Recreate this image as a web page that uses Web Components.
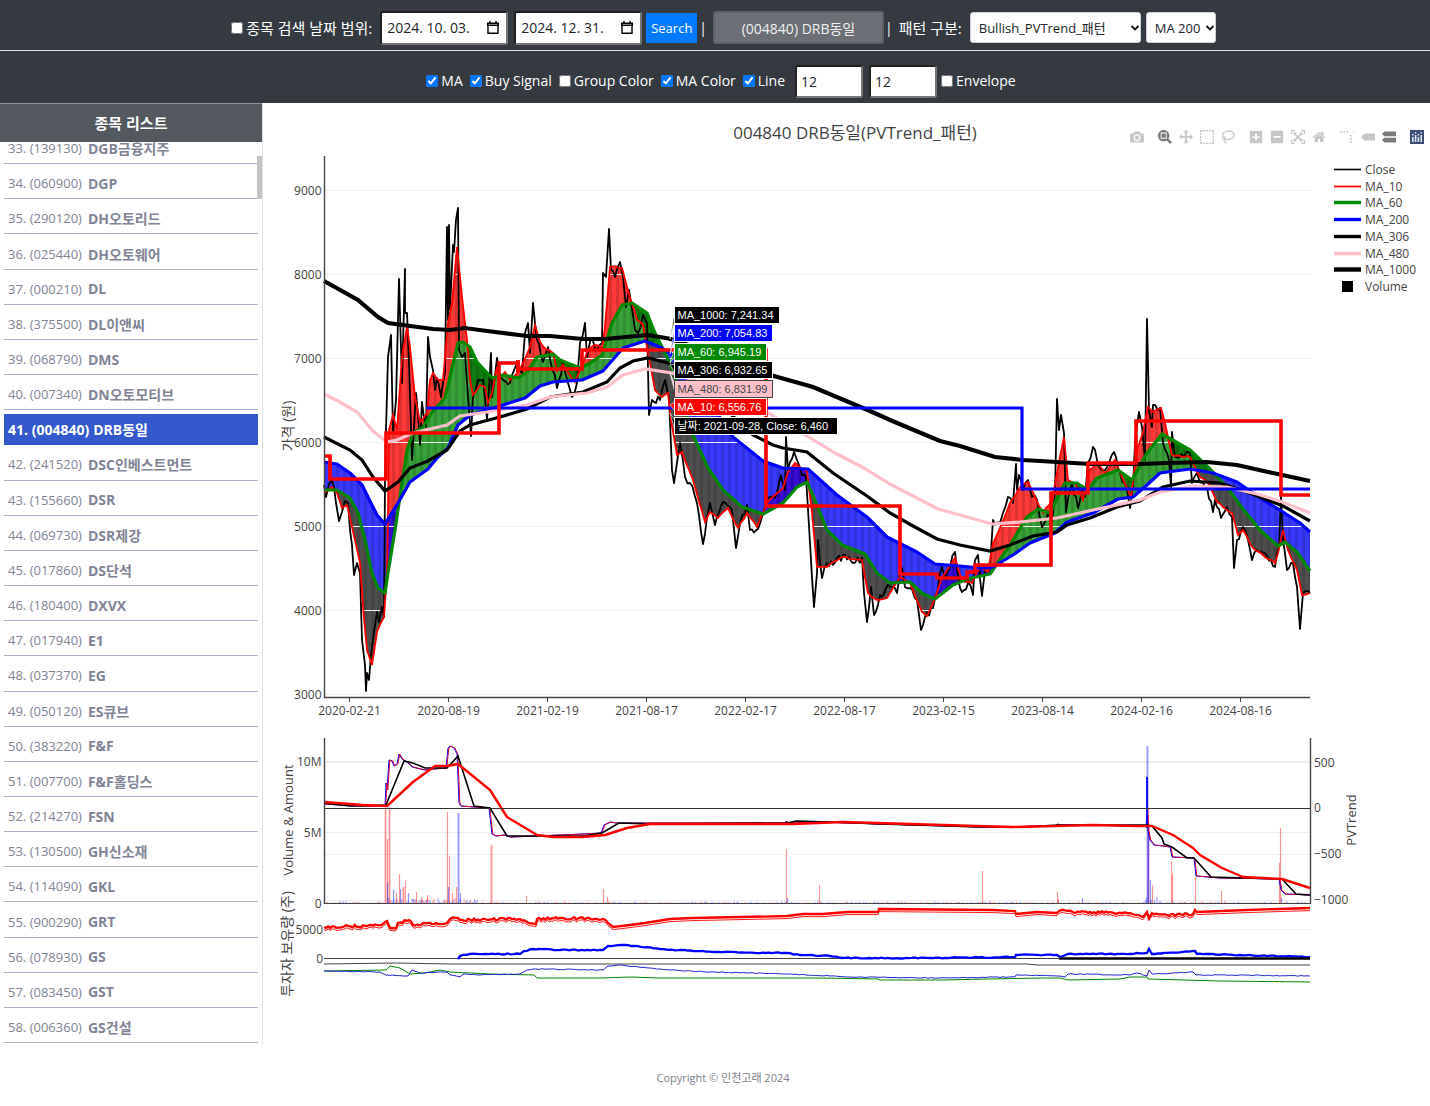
<!DOCTYPE html>
<html lang="ko">
<head>
<meta charset="utf-8">
<title>DRB동일</title>
<style>
html,body{margin:0;background:#fff}
body{font-family:"Open Sans","Noto Sans CJK KR",sans-serif;font-size:14px;color:#212529}
</style>
</head>
<body>
<stock-app></stock-app>
<script>
const define=(name,html,setup)=>customElements.define(name,class extends HTMLElement{
  connectedCallback(){
    if(this.shadowRoot)return;
    const root=this.attachShadow({mode:'open'});
    root.innerHTML=typeof html==='function'?html(this):html;
    if(setup)setup(this,root);
  }
});

define('check-option',el=>`<style>
:host{display:block}
label{display:flex;align-items:center;gap:3px;white-space:nowrap;line-height:20px}
input{width:12px;height:12px;margin:0;accent-color:#0075ff}
</style><label><input type="checkbox" ${el.hasAttribute('checked')?'checked':''}><slot></slot></label>`);

define('date-box',el=>`<style>
:host{display:grid;width:128px}
input,svg{grid-area:1/1}
input{box-sizing:border-box;width:100%;height:34px;border:2px inset #767676;border-radius:3px;padding:0 5px;font:inherit;color:#212529;background:#fff}
svg{align-self:center;justify-self:end;margin-right:9px}
</style><input type="text" aria-label="${el.getAttribute('label')}" value="${el.getAttribute('value')}">
<svg width="12" height="13" viewBox="0 0 12 13"><path d="M1 3v9.2h10V3M0.5 2.2h11v2H.5zM3 0v2M9 0v2" fill="none" stroke="#000" stroke-width="1.4"/></svg>`);

define('number-box',el=>`<style>
:host{display:block;width:68px}
input{box-sizing:border-box;width:100%;height:33px;border:2px inset #767676;border-radius:3px;padding:0 4px;font:inherit;color:#212529;background:#fff;display:block}
</style><input type="text" aria-label="${el.getAttribute('label')}" value="${el.getAttribute('value')}">`);

define('pick-list',el=>`<style>
:host{display:grid}
select,svg{grid-area:1/1}
select{appearance:none;box-sizing:border-box;width:100%;height:31px;border:1px solid #ced4da;border-radius:3px;background:#fff;font:inherit;font-size:13px;color:#212529;padding:0 0 0 8px}
svg{align-self:center;justify-self:end;margin-right:1px;pointer-events:none}
</style><select aria-label="${el.getAttribute('label')}"><option>${el.getAttribute('value')}</option></select>
<svg width="10" height="8" viewBox="0 0 10 8"><path d="M1.5 2L5 5.5 8.5 2" fill="none" stroke="#111" stroke-width="1.8"/></svg>`);

define('tool-bar',`<style>
:host{display:block;background:#343a40;color:#fff}
.row{box-sizing:border-box;display:flex;align-items:center;justify-content:center}
.one{height:51px;padding:5px 0 0 17px;border-bottom:1px solid #dee2e6}
.two{height:52px;padding:8px 0 0 12px;gap:7px}
.one>*{margin-right:6px}
.one>:last-child{margin-right:0}
button{font:inherit;color:#fff;border:0;padding:0}
.go{background:#007bff;width:51px;height:30px;font-size:13px}
.stock{background:#6c6f75;border:2px solid #5d6167;border-radius:3px;width:171px;height:33px;color:#f1f1f1}
.one>.a{margin-right:8px;font-size:15px}
.one>.t{margin-right:4px}
.one>.go{margin-right:2px}
.one>.stock{margin-right:1px}
.one>.c{font-size:15px;margin-right:8px}
.first{width:171px}.ma{width:70px}
.one>.first{margin-right:5px}
.nums{display:flex;gap:6px;margin-left:3px}
.end{margin-left:-3px}
</style>
<div class="row one">
<check-option class="a">종목 검색 날짜 범위:</check-option>
<date-box label="시작일" value="2024. 10. 03."></date-box><date-box class="t" label="종료일" value="2024. 12. 31."></date-box>
<button class="go">Search</button><span>|</span>
<button class="stock">(004840) DRB동일</button><span>|</span><span class="c">패턴 구분:</span>
<pick-list class="first" label="패턴" value="Bullish_PVTrend_패턴"></pick-list><pick-list class="ma" label="이동평균" value="MA 200"></pick-list>
</div>
<div class="row two">
<check-option checked>MA</check-option><check-option checked>Buy Signal</check-option><check-option>Group Color</check-option><check-option checked>MA Color</check-option><check-option checked>Line</check-option>
<div class="nums"><number-box label="단기" value="12"></number-box><number-box label="장기" value="12"></number-box></div>
<check-option class="end">Envelope</check-option>
</div>`);

define('stock-item',el=>`<style>
:host{display:flex;flex:1 1 0;min-height:0}
a{flex:1;display:flex;align-items:center;gap:6px;margin:4px 4px 0;padding:0 4px;border-bottom:1px solid #a9b4c8;color:#808494;text-decoration:none;font-size:13px;white-space:nowrap}
b{font-weight:700;font-size:14px}
:host([active]) a{background:#3459cc;color:#fff;border-color:#3459cc;font-weight:700;font-size:14px;gap:4px}
</style><a href="#">${el.getAttribute('code')} <b>${el.getAttribute('name')}</b></a>`);

define('stock-list',`<style>
:host{display:flex;flex-direction:column;box-sizing:border-box;border-right:1px solid #dee2e6;position:relative}
h2{box-sizing:border-box;margin:0;height:39px;padding-bottom:2px;border-top:1px solid #8d9196;display:flex;align-items:center;justify-content:center;background:#545960;color:#fff;font-size:15px;font-weight:700}
.view{height:902px;overflow:hidden;display:flex;flex-direction:column;justify-content:flex-end}
.items{flex:none;height:914px;padding-bottom:1px;display:flex;flex-direction:column}
.thumb{position:absolute;right:0;top:53px;width:5px;height:43px;background:#c4c4c4}
</style><h2>종목 리스트</h2><div class="view"><div class="items"></div></div><div class="thumb"></div>`,
(el,root)=>{
  const rows=`139130 DGB금융지주|060900 DGP|290120 DH오토리드|025440 DH오토웨어|000210 DL|375500 DL이앤씨|068790 DMS|007340 DN오토모티브|004840 DRB동일|241520 DSC인베스트먼트|155660 DSR|069730 DSR제강|017860 DS단석|180400 DXVX|017940 E1|037370 EG|050120 ES큐브|383220 F&amp;F|007700 F&amp;F홀딩스|214270 FSN|130500 GH신소재|114090 GKL|900290 GRT|078930 GS|083450 GST|006360 GS건설`.split('|');
  root.querySelector('.items').innerHTML=rows.map((r,i)=>{const [c,n]=r.split(' ');return `<stock-item code="${i+33}. (${c})" name="${n}" ${c==='004840'?'active':''}></stock-item>`}).join('');
});

const icons=[
 ['Download',1000,'m500 450c-83 0-150-67-150-150 0-83 67-150 150-150 83 0 150 67 150 150 0 83-67 150-150 150z m400 150h-120c-16 0-34 13-39 29l-31 93c-6 15-23 28-40 28h-340c-16 0-34-13-39-28l-31-94c-6-15-23-28-40-28h-120c-55 0-100-45-100-100v-450c0-55 45-100 100-100h800c55 0 100 45 100 100v450c0 55-45 100-100 100z m-400-550c-138 0-250 112-250 250 0 138 112 250 250 250 138 0 250-112 250-250 0-138-112-250-250-250z m365 380c-19 0-35 16-35 35 0 19 16 35 35 35 19 0 35-16 35-35 0-19-16-35-35-35z'],
 ['Zoom',1000,'m1000-25l-250 251c40 63 63 138 63 218 0 224-182 406-407 406-224 0-406-182-406-406s183-406 407-406c80 0 155 22 218 62l250-250 125 125z m-812 250l0 438 437 0 0-438-437 0z m62 375l313 0 0-312-313 0 0 312z','g on'],
 ['Pan',1000,'m1000 350l-187 188 0-125-250 0 0 250 125 0-188 187-187-187 125 0 0-250-250 0 0 125-188-188 186-187 0 125 252 0 0-250-125 0 187-188 188 188-125 0 0 250 250 0 0-126 187 188z'],
 ['Box select',1000,'M0 850h140v-140h-140zM215 850h140v-90h-140zM430 850h140v-90h-140zM645 850h140v-90h-140zM860 850h140v-140h-140zM0 635h90v-140h-90zM910 635h90v-140h-90zM0 420h90v-140h-90zM910 420h90v-140h-90zM0 205h90v-140h-90zM910 205h90v-140h-90zM0 -10h140v-140h-140zM215 -60h140v-90h-140zM430 -60h140v-90h-140zM645 -60h140v-90h-140zM860 -10h140v-140h-140z'],
 ['Lasso',1000,'M560 820C270 820 60 660 60 430C60 330 110 260 180 215C150 110 200 -20 350 -130L410 -60C300 20 260 80 275 160C340 130 420 115 500 120C780 130 980 290 970 520C960 700 800 820 560 820zM550 730C750 730 880 650 880 510C880 340 720 220 490 205C420 200 360 210 300 235C350 270 370 340 310 380C260 410 200 390 175 335C150 370 145 400 150 440C160 620 330 730 550 730z'],
 ['Zoom in',875,'m1 787l0-875 875 0 0 875-875 0z m687-500l-187 0 0-187-125 0 0 187-188 0 0 125 188 0 0 187 125 0 0-187 187 0 0-125z','g'],
 ['Zoom out',875,'m0 788l0-876 875 0 0 876-875 0z m688-500l-500 0 0 125 500 0 0-125z'],
 ['Autoscale',1000,'M0 850h280v-90h-190v-190h-90zM1000 850v-280h-90v190h-190v90zM0 -150v280h90v-190h190v-90zM1000 -150h-280v90h190v190h90zM170 680h240l-75-75 165-170 165 170-75 75h240v-240l-75 75-165-165 165-165 75 75v-240h-240l75 75-165 165-165-165 75-75h-240v240l75-75 165 165-165 165-75-75z'],
 ['Reset',929,'m786 296v-267q0-15-11-26t-25-10h-214v214h-143v-214h-214q-15 0-25 10t-11 26v267q0 1 0 2t0 2l321 264 321-264q1-1 1-4z m124 39l-34-41q-5-5-12-6h-2q-7 0-12 3l-386 322-386-322q-7-4-13-4-7 2-12 7l-35 41q-4 5-3 13t6 12l401 334q18 15 42 15t43-15l136-114v109q0 8 5 13t13 5h107q8 0 13-5t5-13v-227l122-102q5-5 6-12t-4-13z'],
 ['Spikes',1000,'M0 780h130v-110h-130zM230 780h130v-110h-130zM460 780h130v-110h-130zM770 880a150 150 0 1 0 1 0zM950 780h70v-110h-70zM705 500h130v-120h-130zM705 270h130v-120h-130zM705 40h130v-120h-130z','g'],
 ['Closest',1500,'m375 725l0 0-375-375 375-374 0-1 1125 0 0 750-1125 0z'],
 ['Compare',1125,'m187 786l0 2-187-188 188-187 0 0 937 0 0 373-938 0z m0-499l0 1-187-188 188-188 0 0 937 0 0 376-938-1z','on']
];
define('mode-bar',`<style>
:host{display:flex;align-items:center}
button{border:0;background:none;padding:0;width:14px;height:14px;margin-left:7px;display:grid;place-items:center;opacity:.3}
.on{opacity:.7}.g{margin-left:14px}
svg{display:block;width:14px;height:14px}
path{fill:#444}
.logo{margin-left:14px;opacity:1}
</style>${icons.map(([n,w,d,c])=>`<button title="${n}" class="${c||''}"><svg viewBox="0 0 ${w} 1000"><path transform="matrix(1 0 0 -1 0 850)" d="${d}"/></svg></button>`).join('')}
<button class="logo" title="Plotly"><svg viewBox="0 0 14 14"><rect width="14" height="14" fill="#3b4c75"/><path style="fill:#dfe5f2" d="M2 7h1.6v5H2zM4.8 5h1.6v7H4.8zM7.6 7h1.6v5H7.6zM10.4 5H12v7h-1.6zM2 4h1.5v1.5H2zM4.8 2h1.5v1.5H4.8zM7.6 4h1.5v1.5H7.6zM10.4 2h1.5v1.5h-1.5z"/></svg></button>`);

/* Series, as x y pairs on the drawing's own grid */
const S={
ma1000:'324 281 358 300 378 317 388 323 433 329 450 330 465 328 487 331 527 336 550 336 583 339 605 339 647 335 660 337 671 339 720 356 774 376 813 387 870 411 890 420 940 441 960 446 995 457 1023 460 1057 462 1090 464 1140 464 1167 463 1207 462 1237 465 1273 473 1310 481',
ma480:'324 394 338 401 357 412 373 431 387 442 397 440 413 433 447 425 460 416 487 412 527 405 550 397 567 395 587 393 607 387 623 375 645 369 672 373 740 396 807 436 835 453 862 467 890 484 938 509 960 515 992 524 1020 522 1057 518 1093 510 1140 500 1160 492 1193 486 1227 487 1257 494 1280 501 1310 513',
ma306:'324 437 350 450 362 460 373 477 385 491 398 482 410 468 428 461 447 450 460 431 470 425 500 417 527 409 550 397 583 392 607 382 620 368 633 361 648 358 672 364 710 395 753 435 773 445 783 448 807 452 833 473 867 496 890 513 913 526 937 539 960 545 990 551 1010 545 1033 536 1057 532 1067 525 1090 518 1117 507 1140 501 1163 487 1190 481 1220 483 1247 492 1283 506 1310 521',
ma200:'324 462 337 464 350 473 362 485 377 515 385 524 398 503 410 482 428 469 437 458 448 448 458 425 470 415 500 406 525 398 540 386 553 382 582 380 603 371 623 348 645 341 662 348 673 355 705 395 733 437 763 461 783 468 808 469 837 495 867 517 887 537 917 552 935 564 960 566 980 568 993 567 1013 555 1030 543 1055 533 1067 522 1093 513 1118 499 1133 497 1147 485 1160 473 1190 469 1213 473 1237 482 1260 498 1283 512 1300 523 1310 532',
ma60:'324 490 337 490 350 498 358 513 365 540 372 573 378 588 385 593 388 573 395 530 402 483 407 450 413 433 423 427 432 412 445 398 452 368 458 343 463 342 470 347 477 362 492 378 503 375 518 378 527 372 537 357 553 354 560 360 580 368 590 363 602 355 612 323 622 305 632 303 647 313 655 333 667 357 673 370 693 435 708 468 723 490 742 507 763 514 783 503 797 487 807 482 815 500 827 530 842 545 865 554 877 573 890 583 910 582 923 594 935 599 953 585 967 579 990 574 1010 545 1027 517 1038 509 1050 513 1060 492 1065 483 1077 483 1088 490 1097 478 1118 470 1132 480 1147 453 1162 434 1190 450 1210 469 1227 487 1243 509 1260 530 1278 546 1285 542 1297 552 1310 571',
ma10:'324 493 332 487 337 493 342 508 347 505 352 527 360 563 363 607 367 650 372 665 377 632 384 617 387 573 388 513 389 430 393 415 397 430 402 357 407 327 410 347 415 397 420 422 427 413 430 380 433 373 438 380 443 380 448 323 452 303 457 247 462 297 467 340 470 380 473 395 480 385 485 387 488 403 492 393 497 367 500 378 505 372 510 380 517 373 523 363 530 347 535 325 540 342 547 350 553 353 557 371 563 365 575 382 582 367 588 350 595 345 602 348 605 327 610 267 622 268 627 287 637 320 643 325 648 353 655 390 662 397 668 393 671 420 677 455 682 452 693 480 705 522 710 512 718 518 728 508 738 528 747 513 757 527 767 503 783 488 788 472 795 463 807 472 812 513 817 567 827 567 843 557 862 560 868 593 877 600 887 598 900 577 910 583 922 612 927 616 933 603 942 577 955 558 962 580 972 583 980 567 988 572 993 543 1002 523 1010 503 1020 487 1028 482 1035 497 1043 513 1052 500 1058 467 1064 437 1068 480 1075 483 1083 500 1090 470 1097 462 1105 473 1115 460 1122 477 1131 497 1137 450 1143 432 1148 407 1153 412 1161 408 1165 423 1172 455 1190 457 1200 477 1208 483 1217 502 1223 507 1232 513 1238 535 1243 530 1253 548 1265 557 1275 563 1278 553 1283 530 1288 550 1297 570 1302 595 1310 593',
close:'324 485 326 497 329 484 332 480 334 487 336 503 339 521 342 512 345 501 348 503 350 530 352 545 354 575 357 563 360 573 362 640 365 665 366 691 367 673 369 680 371 655 374 632 377 612 379 622 382 607 384 617 385 480 386 430 388 357 391 335 393 433 396 400 399 279 402 383 405 269 405 313 407 313 409 363 412 460 415 410 416 393 420 445 422 402 426 427 428 337 430 357 433 370 435 390 437 378 441 397 445 373 447 227 448 320 449 225 450 310 453 245 454 252 456 220 458 208 459 350 462 357 465 353 468 397 471 436 473 397 478 380 483 380 487 420 491 353 492 397 497 358 500 377 510 383 517 363 522 373 525 333 528 323 530 353 533 303 537 340 543 362 548 347 557 388 563 363 572 397 577 383 580 343 585 323 587 357 591 338 597 350 602 343 603 273 606 277 609 229 611 270 615 277 620 262 623 277 626 307 629 290 635 330 638 333 643 315 647 323 649 415 652 400 660 400 665 380 669 397 672 470 674 483 680 443 685 477 690 483 697 503 703 544 707 517 710 503 715 525 723 502 732 510 736 548 740 523 747 505 750 530 758 529 763 513 768 498 777 493 781 475 785 490 786 437 788 470 794 452 797 460 802 475 806 477 810 543 814 607 817 573 818 540 822 578 827 563 833 565 843 555 853 563 862 558 864 593 867 622 871 587 874 615 880 595 890 587 897 593 902 568 905 587 910 588 917 600 921 630 925 617 933 608 942 567 945 578 950 567 955 552 958 577 962 592 968 583 973 595 975 560 978 555 982 596 985 570 990 567 993 520 1000 523 1003 513 1008 497 1013 503 1016 464 1017 490 1019 475 1023 490 1028 480 1032 497 1037 500 1042 527 1048 513 1052 523 1055 493 1057 399 1059 430 1061 415 1064 433 1066 512 1072 483 1078 508 1082 490 1085 497 1088 463 1093 447 1097 460 1103 470 1114 452 1120 473 1127 490 1130 508 1133 487 1135 443 1139 412 1142 427 1145 460 1147 319 1149 410 1152 427 1153 405 1160 408 1163 443 1169 460 1171 487 1172 432 1175 457 1190 453 1192 483 1197 473 1207 487 1213 512 1215 500 1221 518 1227 507 1232 517 1234 568 1237 540 1243 527 1248 540 1252 560 1257 550 1265 553 1275 567 1279 547 1281 497 1283 540 1287 570 1293 563 1297 587 1300 629 1303 593 1310 593',
stepRed:'324 456 330 456 330 479 386 479 386 433 499 433 499 363 518 363 518 369 582 369 582 350 766 350 766 506 900 506 900 574 937 574 937 578 967 578 967 572 975 572 975 565 1051 565 1051 493 1088 493 1088 463 1136 463 1136 421 1281 421 1281 495 1310 495',
stepBlue:'426 408 1022 408 1022 489 1310 489',
pvFast:'324 804 355 806 385 806 386 783 387 790 389 760 392 761 394 766 397 764 399 754 402 759 408 763 412 767 425 770 433 769 446 768 448 748 450 746 454 748 457 754 459 803 461 806 474 807 489 808 492 834 496 836 504 835 510 837 537 836 583 834 601 833 604 825 610 822 616 823 660 823 785 823 786 821 788 823 820 822 880 824 980 827 1056 826 1057 824 1060 825 1146 826 1147 815 1148 830 1150 840 1154 845 1163 846 1170 847 1172 857 1194 858 1196 876 1220 878 1279 879 1281 890 1285 894 1310 895',
pvMid:'324 803 350 806 386 805 404 761 413 763 425 768 447 768 458 756 474 806 490 808 507 836 537 836 583 836 602 833 619 823 650 824 787 823 796 821 830 822 880 824 980 827 1020 827 1060 825 1147 825 1152 826 1162 838 1164 844 1172 847 1187 858 1194 858 1211 877 1282 879 1296 894 1310 895',
pvSlow:'324 802 363 805 387 806 413 782 435 766 447 766 458 764 490 790 507 817 537 835 553 837 583 837 605 835 627 828 650 824 693 824 793 824 843 822 977 826 1013 827 1093 825 1137 826 1152 826 1173 835 1193 848 1200 855 1222 868 1243 877 1282 879 1310 888',
holdRed:'324 927 367 926 383 924 387 921 390 928 396 928 398 923 409 920 413 925 430 923 447 923 450 919 458 918 462 920 520 919 527 922 536 924 537 919 560 918 603 919 608 923 613 927 630 925 645 923 670 919 693 918 787 916 803 914 823 914 847 912 878 912 879 909 993 910 1015 911 1016 914 1037 912 1057 913 1059 911 1080 912 1130 913 1143 917 1147 912 1149 918 1152 913 1167 915 1193 914 1195 910 1197 912 1247 910 1310 908',
holdBlue:'458 959 460 956 470 954 520 954 524 951 533 949 560 950 603 950 608 946 625 945 660 949 715 952 787 953 800 955 830 956 842 958 930 958 1015 957 1016 955 1057 955 1060 957 1068 954 1130 954 1137 953 1147 953 1149 949 1152 954 1195 951 1197 954 1240 955 1310 957',
thinBlue:'324 971 380 972 386 975 403 976 408 976 412 970 420 973 447 972 450 975 460 977 463 974 480 975 520 974 527 970 536 969 603 970 608 966 620 965 650 968 670 970 710 972 787 974 830 976 850 977 940 978 1015 977 1016 975 1057 976 1065 977 1068 974 1130 975 1137 973 1147 976 1149 970 1152 974 1193 972 1196 975 1240 975 1310 976',
thinGreen:'324 971 386 970 390 966 400 968 410 974 425 973 440 970 450 972 490 974 534 975 537 978 600 978 630 977 660 978 820 978 878 979 879 980 940 980 1040 978 1060 978 1068 980 1120 979 1130 977 1147 977 1148 979 1220 981 1310 982',
thinGray:'324 964 396 963 450 964 1027 964 1037 965 1310 965'
};
const P={};
for(const k in S){const n=S[k].split(' ').map(Number);P[k]=[];for(let i=0;i<n.length;i+=2)P[k].push([n[i],n[i+1]]);}
let seed=7;const rnd=()=>(seed=(seed*16807)%2147483647)/2147483647;
/* adds day-to-day noise between the key points */
const rough=(pts,amp,step)=>{const o=[pts[0]];for(let i=1;i<pts.length;i++){const [a,b]=pts[i-1],[c,d]=pts[i];const m=Math.floor((c-a)/step);for(let j=1;j<m;j++){const t=j/m;o.push([a+(c-a)*t,b+(d-b)*t+(rnd()-.5)*2*amp])}o.push(pts[i])}return o};
const at=(pts,x)=>{for(let i=1;i<pts.length;i++)if(pts[i][0]>=x){const [a,b]=pts[i-1],[c,d]=pts[i];return c===a?d:b+(d-b)*(x-a)/(c-a)}return pts[pts.length-1][1]};
const dd=pts=>'M'+pts.map(p=>p[0].toFixed(1)+' '+p[1].toFixed(1)).join('L');
const line=(pts,c,w,extra='')=>`<path d="${dd(pts)}" fill="none" stroke="${c}" stroke-width="${w}" ${extra}/>`;
const band=(a,b,up,down)=>{
  let out='',run=[],sign=0;
  const flush=()=>{if(run.length>1){const d=dd(run.map(r=>[r[0],r[1]]).concat(run.slice().reverse().map(r=>[r[0],r[2]])))+'Z';out+=`<path d="${d}" fill="${sign<0?up:down}" fill-opacity=".78"/><path d="${d}" fill="url(#stripes)"/>`}};
  for(let x=324;x<=1310;x++){const ya=at(a,x),yb=at(b,x),s=ya<yb?-1:1;if(s!==sign){const l=run[run.length-1];flush();run=l?[l]:[];sign=s}run.push([x,ya,yb])}
  flush();return out};
const txt=(x,y,s,o='')=>`<text x="${x}" y="${y}" ${o}>${s}</text>`;
const vtxt=(x,y,s,f=13)=>`<text transform="translate(${x} ${y}) rotate(-90)" text-anchor="middle" font-size="${f}">${s}</text>`;
const h=(y,c='#eee',x1=324,x2=1310)=>`<path d="M${x1} ${y}H${x2}" stroke="${c}"/>`;

function drawChart(){
  let o='';
  o+=band(P.ma10,P.ma60,'#f00','#1c1c1c')+band(P.ma60,P.ma200,'#080','#00f');
  [190,274,358,442,526,610,694].forEach((y,i)=>{o+=h(y+.5)+txt(321.5,y+5,9000-i*1000,'text-anchor="end"')});
  o+=line(rough(P.close,4,2),'#000',1.8,'stroke-linejoin="round"')+line(rough(P.ma10,1,3),'#f00',1.8)+line(P.ma60,'#080',3.2,'stroke-linejoin="round"')+line(P.ma200,'#00f',3.2,'stroke-linejoin="round"')+line(P.ma306,'#000',3.2)+line(P.ma480,'#ffc0cb',3.2)+line(P.ma1000,'#000',4.2);
  o+=line(P.stepBlue,'#00f',3.2)+line(P.stepRed,'#f00',3.6)+'<path d="M516 360h4v12h-4z" fill="#f00"/>';
  o+='<path d="M324.5 156V697.5H1310" fill="none" stroke="#444" stroke-width="1.4"/>';
  ['2020-02-21','2020-08-19','2021-02-19','2021-08-17','2022-02-17','2022-08-17','2023-02-15','2023-08-14','2024-02-16','2024-08-16'].forEach((t,i)=>{const x=349.5+i*99;o+=`<path d="M${x} 697v5" stroke="#444"/>`+txt(x,715,t,'text-anchor="middle"')});
  /* volume and PVTrend */
  [761.5,762.5,832.5,854.5,900.5].forEach(y=>o+=h(y));
  const bar=(x,y,c,w=1)=>`<path d="M${x} ${y}V903" stroke="${c}" stroke-width="${w}" stroke-opacity=".42"/>`;
  for(let x=325;x<1310;x+=1.3){const k=x>388&&x<480?7:x>1145&&x<1162?8:2;o+=bar(x.toFixed(1),(903-rnd()*rnd()*k).toFixed(1),rnd()>.5?'#f00':'#00f')}
  '385 808 r2,387 839 r,387 883 b,389 807 r2,393 890 b,396 893 r,399 874 r,400 889 b,403 887 r2,405 880 r,408 893 b,416 892 r,421 897 r,427 895 r,447 812 r1,449 856 r,448 887 b,452 893 r,456 887 r,458 813 b2,460 893 b,491 845 r2,526 896 r,603 889 r,607 897 r,786 849 r1,787 898 b,819 885 r,982 871 r,1057 892 r,1058 899 r,1082 898 b,1147 746 b2,1148 808 r1,1148 825 b2,1150 880 b,1152 885 r,1171 861 r,1172 874 r,1195 877 r1,1221 891 r,1280 828 r1,1279 863 r,1281 898 b'.split(',').forEach(s=>{const [x,y,c]=s.split(' ');o+=bar(+x+.5,y,c[0]==='r'?'#f00':'#00f',c[1]==='2'?1.8:1.2)});
  o+=h(903.5,'#444');
  o+=line(P.pvFast,'#00f',1)+line(P.pvFast.map(p=>[p[0]+.8,p[1]]),'#d0003c',1)+'<path d="M1147 777V828" stroke="#00f" stroke-width="1.8"/>'+line(P.pvMid,'#000',1.6)+line(P.pvSlow,'#f00',2.4,'stroke-linejoin="round"')+h(808.5,'#333');
  o+='<path d="M324.5 738V904M1310.5 738V904" stroke="#444" stroke-width="1.4"/>';
  o+=txt(321.5,766,'10M','text-anchor="end"')+txt(321.5,837,'5M','text-anchor="end"')+txt(321.5,908,'0','text-anchor="end"');
  [[767,'500'],[812,'0'],[858,'−500'],[904,'−1000']].forEach(a=>o+=txt(1314,a[0],a[1]));
  /* holdings */
  o+=h(929.5)+h(958.5,'#444')+txt(323,934,'5000','text-anchor="end"')+txt(323,963,'0','text-anchor="end"');
  const hr=P.holdRed;
  const hrr=[...rough(hr.filter(p=>p[0]<=610),1.3,2),...hr.filter(p=>p[0]>610&&p[0]<1057),...rough(hr.filter(p=>p[0]>=1057&&p[0]<1200),1.3,2),...hr.filter(p=>p[0]>=1200)];
  o+=line(hrr.map(p=>[p[0],p[1]+2.6]),'#f00',.9)+line(hrr,'#f00',2.3);
  o+=line(rough(P.holdBlue,.5,3),'#00f',2.3)+h(958.5,'#000" stroke-width="2.4',1059)+line(P.thinGray,'#444',1)+line(P.thinGreen,'#080',1)+line(rough(P.thinBlue,.4,3),'#22c',1);
  o+=vtxt(293,426,'가격 (원)',14)+vtxt(293,820,'Volume &amp; Amount')+vtxt(292,944,'투자자 보유량 (주)',14)+vtxt(1356,820,'PVTrend');
  o+=txt(855,139,'004840 DRB동일(PVTrend_패턴)','text-anchor="middle" font-size="17"');
  /* legend */
  [['Close','#000',1.6],['MA_10','#f00',1.8],['MA_60','#080',3.4],['MA_200','#00f',3.4],['MA_306','#000',3.4],['MA_480','#ffc0cb',3.4],['MA_1000','#000',4.4],['Volume']].forEach(([n,c,w],i)=>{
    const y=169+Math.round(i*16.7);
    o+=c?`<path d="M1334 ${y+.5}H1361" stroke="${c}" stroke-width="${w}"/>`:`<rect x="1342" y="${y-5}" width="11" height="11" fill="#000"/>`;
    o+=txt(1365,y+5,n)});
  /* hover labels */
  o+='<g font-family="Liberation Sans,Noto Sans CJK KR,sans-serif" font-size="11">';
  [['MA_1000: 7,241.34','#000',105,339],['MA_200: 7,054.83','#00f',98,354],['MA_60: 6,945.19','#080',92,363],['MA_306: 6,932.65','#000',98,364],['MA_480: 6,831.99','#ffc0cb',98,373],['MA_10: 6,556.76','#f00',92,405],['날짜: 2021-09-28, Close: 6,460','#000',163,413]].forEach(([t,c,w,y0],i)=>{
    const y=306+Math.floor(i*18.5),k=i===4;
    o+=`<path d="M670 ${y0}L675 ${y+4}V${y+13}Z" fill="${c}" stroke="#fff" stroke-width=".6"/><rect x="674.5" y="${y+.5}" width="${w}" height="17" fill="${c}" stroke="${k?'#444':'#fff'}"/>`+txt(677.5,y+13,t,`fill="${k?'#444':'#fff'}"`)});
  return o+'</g>';
}
define('price-chart',()=>`<style>
:host{display:block;position:relative}
svg{display:block;width:100%;height:auto}
mode-bar{position:absolute;top:27px;right:6px}
</style><svg viewBox="263 103 1167 941" font-family="Open Sans,Noto Sans CJK KR,sans-serif" font-size="12" fill="#444">
<defs><pattern id="stripes" width="7" height="10" patternUnits="userSpaceOnUse"><path d="M0 0h3v10H0z" fill="#000" fill-opacity=".12"/></pattern></defs>
<g>${drawChart()}</g></svg><mode-bar></mode-bar>`);

define('page-footer',`<style>
:host{display:flex;justify-content:center;padding:25px 0 19px 16px;font-size:11px;line-height:18px;color:#7b8087}
</style><slot></slot>`);

define('stock-app',`<style>
:host{display:block}
main{display:grid;grid-template-columns:263px minmax(0,1fr);align-items:start}
</style><tool-bar></tool-bar><main><stock-list></stock-list><price-chart></price-chart></main><page-footer>Copyright © 인천고래 2024</page-footer>`);
</script>
</body>
</html>
